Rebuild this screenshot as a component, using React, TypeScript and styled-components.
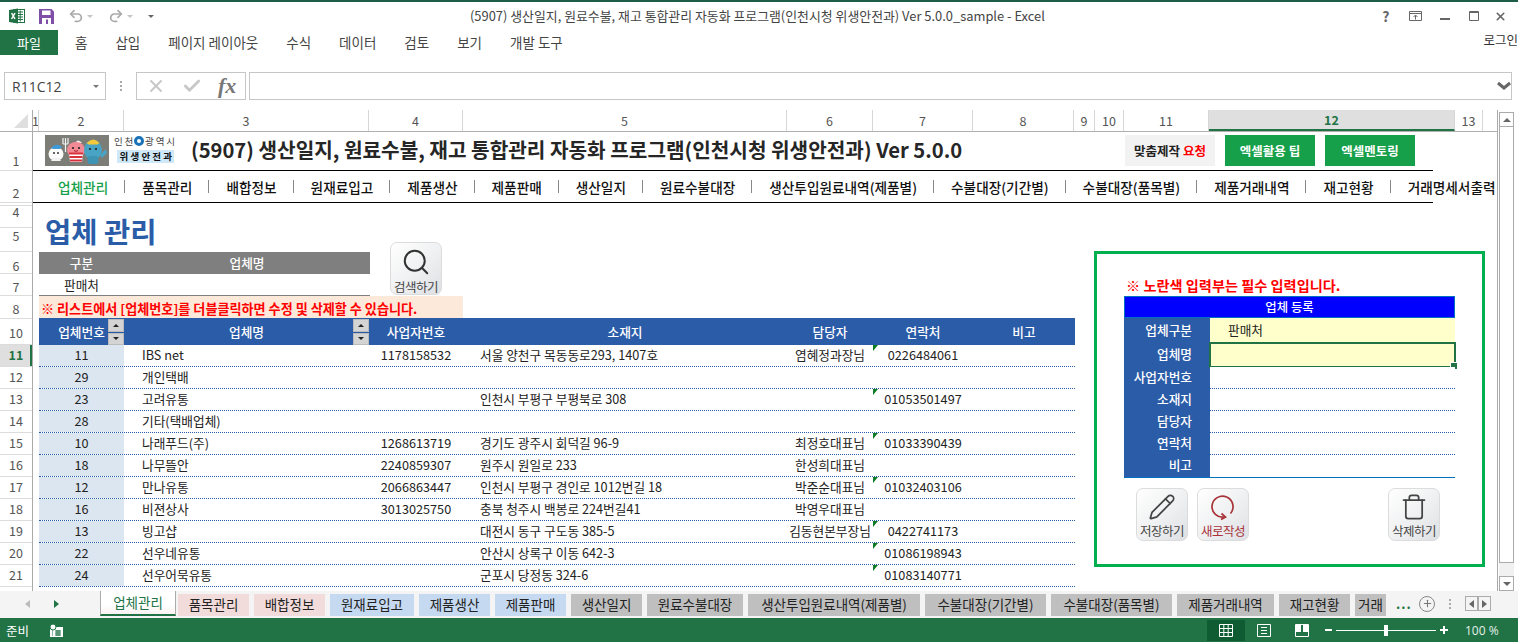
import React from 'react';
import styled, { createGlobalStyle } from 'styled-components';
import { Check, Pencil, Plus, Search, Trash, Undo2, Redo2, X } from 'lucide-react';

const GREEN = '#217346';
const BLUE = '#2b5ca8';
const KR = '"Noto Sans CJK KR", "Noto Sans", sans-serif';

const GlobalStyle = createGlobalStyle`
  html, body { margin: 0; padding: 0; background: #fff; }
  * { box-sizing: border-box; }
  body { font-family: ${KR}; }
`;

const Window = styled.div`
  width: 1518px;
  height: 642px;
  display: flex;
  flex-direction: column;
  overflow: hidden;
  border-top: 2px solid #1d5c46;
  background: #fff;
  color: #222;
`;

/* ---- title bar ---- */
const TitleBar = styled.div`
  height: 28px;
  display: flex;
  align-items: center;
  position: relative;
`;

const Qat = styled.div`
  display: flex;
  align-items: center;
  padding-left: 9px;
`;

const QatSlot = styled.span<{ $w: number }>`
  width: ${p => p.$w}px;
  display: flex;
  align-items: center;
`;

const Caret = styled.span<{ $color?: string }>`
  width: 0;
  height: 0;
  border-left: 3px solid transparent;
  border-right: 3px solid transparent;
  border-top: 3px solid ${p => p.$color || '#c4c4c4'};
  margin-left: 3px;
`;

const DocTitle = styled.div`
  position: absolute;
  left: 470px;
  top: 6px;
  font-size: 12.9px;
  line-height: 16px;
  color: #444;
  white-space: nowrap;
`;

const WinButtons = styled.div`
  margin-left: auto;
  display: flex;
  align-items: center;
  padding-right: 7px;
`;

const WinBtn = styled.span`
  width: 29.5px;
  display: flex;
  justify-content: center;
  align-items: center;
  font-size: 14px;
  font-weight: 700;
  color: #666;
  line-height: 16px;
  &:last-child { width: 22px; }
`;

/* ---- ribbon tabs ---- */
const RibbonTabs = styled.div`
  height: 25px;
  display: flex;
  align-items: center;
  gap: 28px;
  font-size: 13.5px;
  line-height: 25px;
  color: #444;
`;

const FileTab = styled.div`
  width: 58px;
  height: 25px;
  margin-right: -11px;
  background: ${GREEN};
  color: #fff;
  font-size: 13px;
  text-align: center;
`;

const Login = styled.div`
  margin-left: auto;
  margin-top: -7px;
  font-size: 12.5px;
  color: #333;
  white-space: nowrap;
`;

const RibbonGap = styled.div`
  height: 17px;
`;

/* ---- formula bar ---- */
const FormulaBar = styled.div`
  height: 28px;
  display: flex;
  align-items: stretch;
  padding-left: 4px;
  padding-right: 6px;
  margin-bottom: 10px;
`;

const NameBox = styled.div`
  width: 102px;
  border: 1px solid #c6c6c6;
  display: flex;
  align-items: center;
  justify-content: space-between;
  padding: 0 6px 0 7px;
  font-family: "Open Sans", sans-serif;
  font-size: 14px;
  color: #444;
`;

const Dots = styled.div`
  width: 30px;
  display: flex;
  flex-direction: column;
  align-items: center;
  justify-content: center;
  gap: 2px;
  & > i { width: 2px; height: 2px; background: #aaa; display: block; }
`;

const FxBox = styled.div`
  width: 110px;
  border: 1px solid #c6c6c6;
  display: flex;
  align-items: center;
  gap: 16px;
  padding-left: 9px;
`;

const FxText = styled.span`
  font-family: "Liberation Serif", serif;
  font-style: italic;
  font-weight: 700;
  font-size: 22px;
  line-height: 24px;
  color: #777;
`;

const FormulaInput = styled.div`
  flex: 1;
  margin-left: 3px;
  border: 1px solid #c6c6c6;
  display: flex;
  align-items: center;
  justify-content: flex-end;
`;

/* ---- workspace ---- */
const Workspace = styled.div`
  height: 481px;
  display: flex;
`;

const SheetPane = styled.div`
  width: 1498px;
  border-right: 1px solid #aaa;
  display: flex;
  flex-direction: column;
  overflow: hidden;
`;

const ColHeaders = styled.div`
  height: 22px;
  display: flex;
  flex: none;
  border-bottom: 1px solid #b0b0b0;
`;

const Corner = styled.div`
  width: 33px;
  border-right: 1px solid #aaa;
  position: relative;
  &::after {
    content: '';
    position: absolute;
    right: 4px;
    bottom: 3px;
    border-style: solid;
    border-width: 0 0 14px 14px;
    border-color: transparent transparent #dfdfdf transparent;
  }
`;

const ColHead = styled.div<{ $w: number; $active?: boolean }>`
  width: ${p => p.$w}px;
  flex: none;
  display: flex;
  align-items: center;
  justify-content: center;
  font-size: 12.5px;
  line-height: 20px;
  color: ${p => (p.$active ? GREEN : '#555')};
  font-weight: ${p => (p.$active ? 700 : 400)};
  background: ${p => (p.$active ? '#dfdfdf' : 'transparent')};
  border-right: 1px solid #d6d6d6;
  border-bottom: ${p => (p.$active ? `2px solid ${GREEN}` : '0')};
  overflow: hidden;
`;

const SheetBody = styled.div`
  flex: 1;
  display: flex;
  min-height: 0;
`;

const RowHeaders = styled.div`
  width: 33px;
  flex: none;
  border-right: 1px solid #aaa;
  display: flex;
  flex-direction: column;
`;

const RowHead = styled.div<{ $h: number; $pb: number; $active?: boolean }>`
  height: ${p => p.$h}px;
  flex: none;
  display: flex;
  align-items: flex-end;
  justify-content: center;
  padding-bottom: ${p => p.$pb}px;
  font-size: 12.5px;
  line-height: 14px;
  color: ${p => (p.$active ? GREEN : '#555')};
  font-weight: ${p => (p.$active ? 700 : 400)};
  background: ${p => (p.$active ? '#dfdfdf' : 'transparent')};
  border-bottom: 1px solid #dcdcdc;
  box-shadow: ${p => (p.$active ? `inset -2px 0 0 ${GREEN}` : 'none')};
`;

const Sheet = styled.div`
  flex: 1;
  min-width: 0;
`;

const BannerRow = styled.div`
  width: 1400px;
  height: 39px;
  border-bottom: 1px solid #000;
  display: flex;
  align-items: flex-start;
  padding: 3px 0 0 12px;
`;

const Logo = styled.div`
  width: 133px;
  height: 31px;
  display: flex;
  gap: 5px;
  flex: none;
`;

const LogoText = styled.div`
  display: flex;
  flex-direction: column;
  align-items: center;
  font-size: 9.5px;
  line-height: 13px;
  letter-spacing: 1.8px;
  color: #444;
  white-space: nowrap;
`;

const LogoDept = styled.span`
  margin-top: 2px;
  padding: 0 0 0 3px;
  font-weight: 700;
  font-size: 9.5px;
  line-height: 13px;
  letter-spacing: 2.2px;
  color: #111;
  background: #cfe8f8;
`;

const LogoDot = styled.i`
  display: inline-block;
  width: 10px;
  height: 10px;
  border-radius: 50%;
  border: 3px solid #1a73b8;
  vertical-align: -1px;
  margin: 0 1px 0 -1px;
`;

const MainTitle = styled.h1`
  margin: 0 0 0 13px;
  font-size: 20.2px;
  line-height: 30px;
  font-weight: 700;
  color: #262626;
  white-space: nowrap;
`;

const LinkButtons = styled.div`
  margin-left: auto;
  display: flex;
  gap: 10px;
  padding-right: 18px;
`;

const LinkButton = styled.div<{ $green?: boolean }>`
  width: 90px;
  height: 31px;
  display: flex;
  align-items: center;
  justify-content: center;
  font-size: 12.5px;
  font-weight: 700;
  color: ${p => (p.$green ? '#fff' : '#222')};
  background: ${p => (p.$green ? '#17a04a' : '#f2f2f2')};
  & > em { font-style: normal; color: #f00; margin-left: 3px; }
`;

const NavRow = styled.div`
  width: 1400px;
  height: 32px;
  border-bottom: 1px solid #000;
  display: flex;
  align-items: center;
  padding-left: 25px;
  margin-bottom: 3px;
  white-space: nowrap;
`;

const NavItem = styled.span<{ $active?: boolean }>`
  font-size: 13.65px;
  line-height: 20px;
  font-weight: 500;
  color: ${p => (p.$active ? '#17a04a' : '#111')};
`;

const NavSep = styled.i`
  width: 1px;
  height: 13px;
  margin: 0 17px 0 16px;
  background: #888;
  flex: none;
`;

const Content = styled.div`
  display: flex;
  align-items: flex-start;
  padding-left: 6px;
  position: relative;
`;

const ListColumn = styled.div`
  width: 1036px;
  flex: none;
`;

const PageTitle = styled.h2`
  margin: 0;
  height: 46px;
  padding-left: 6px;
  font-size: 28.5px;
  line-height: 50px;
  font-weight: 700;
  color: ${BLUE};
`;

const SearchHead = styled.div`
  width: 331px;
  height: 22px;
  display: grid;
  grid-template-columns: 85px 1fr;
  background: #7f7f7f;
  color: #fff;
  font-size: 12.7px;
  line-height: 22px;
  text-align: center;
  font-weight: 500;
`;

const SearchValue = styled.div`
  width: 331px;
  height: 22px;
  display: grid;
  grid-template-columns: 85px 1fr;
  border-bottom: 1px solid #7f7f7f;
  font-size: 12.7px;
  line-height: 21px;
  text-align: center;
`;

const Notice = styled.div`
  width: 424px;
  height: 22px;
  background: #fde9d9;
  color: #f00;
  font-size: 13.1px;
  font-weight: 700;
  line-height: 25px;
  padding-left: 2px;
  white-space: nowrap;
`;

const ShapeButton = styled.div<{ $red?: boolean }>`
  width: 52px;
  height: 53px;
  flex: none;
  border: 1px solid #dcdcdc;
  border-radius: 7px;
  background: linear-gradient(135deg, #fff 0%, #f0f1f2 50%, #dde0e4 100%);
  display: flex;
  flex-direction: column;
  align-items: center;
  padding-top: 4px;
  font-size: 12.5px;
  line-height: 16px;
  letter-spacing: -0.5px;
  color: ${p => (p.$red ? '#a8343a' : '#444')};
  white-space: nowrap;
  & > svg { flex: none; margin-bottom: 2px; }
`;

const FloatingSearch = styled(ShapeButton)`
  position: absolute;
  left: 357px;
  top: 36px;
`;

const TableHeader = styled.div`
  height: 27px;
  display: grid;
  grid-template-columns: 85px 245px 94px 324px 86px 100px 102px;
  background: ${BLUE};
  color: #fff;
  font-size: 12.7px;
  font-weight: 500;
`;

const HeadCell = styled.div`
  display: flex;
  align-items: center;
  justify-content: center;
  position: relative;
`;

const Spinner = styled.div`
  position: absolute;
  right: 0;
  top: 1px;
  bottom: 0;
  width: 16px;
  display: flex;
  flex-direction: column;
  gap: 1px;
`;

const SpinBtn = styled.span<{ $up?: boolean }>`
  flex: 1;
  background: #d4d4d4;
  border: 1px solid #bbb;
  display: flex;
  align-items: center;
  justify-content: center;
  &::after {
    content: '';
    border-left: 3px solid transparent;
    border-right: 3px solid transparent;
    ${p => (p.$up ? 'border-bottom: 3px solid #222;' : 'border-top: 3px solid #222;')}
  }
`;

const TableRow = styled.div`
  height: 22px;
  display: grid;
  grid-template-columns: 85px 245px 94px 324px 86px 100px 102px;
  border-bottom: 1px dotted ${BLUE};
  font-size: 12.7px;
  line-height: 20px;
  color: #222;
  white-space: nowrap;
`;

const Cell = styled.div<{ $pad?: number; $center?: boolean; $tint?: boolean; $flag?: boolean }>`
  position: relative;
  padding-left: ${p => p.$pad || 0}px;
  text-align: ${p => (p.$center ? 'center' : 'left')};
  background: ${p => (p.$tint ? '#dce6f1' : 'transparent')};
  &::before {
    content: ${p => (p.$flag ? "''" : 'none')};
    position: absolute;
    left: 0;
    top: 0;
    border-style: solid;
    border-width: 6px 5px 0 0;
    border-color: #0b7a20 transparent transparent transparent;
  }
`;

/* ---- form panel ---- */
const Panel = styled.div`
  width: 391px;
  height: 316px;
  flex: none;
  margin: 45px 0 0 19px;
  border: 3px solid #00b050;
  padding: 22px 27px 0;
  display: flex;
  flex-direction: column;
`;

const PanelNote = styled.div`
  height: 20px;
  font-size: 14.2px;
  font-weight: 700;
  line-height: 19px;
  color: #f00;
  padding-left: 2px;
  white-space: nowrap;
`;

const FormTitle = styled.div`
  width: 331px;
  height: 22px;
  background: #00f;
  border: 1px solid #0070c0;
  color: #fff;
  font-size: 12.4px;
  font-weight: 500;
  line-height: 20px;
  text-align: center;
`;

const FormGrid = styled.div`
  width: 331px;
  display: grid;
  grid-template-columns: 86px 1fr;
  border-bottom: 1px solid #0070c0;
`;

const FormLabel = styled.div<{ $h: number }>`
  height: ${p => p.$h}px;
  background: ${BLUE};
  color: #fff;
  font-size: 12.7px;
  font-weight: 500;
  line-height: ${p => p.$h - 2}px;
  text-align: right;
  padding-right: 18px;
`;

const FormValue = styled.div<{ $h: number; $yellow?: boolean; $dotted?: boolean; $selected?: boolean }>`
  height: ${p => p.$h}px;
  position: relative;
  padding-left: 18px;
  font-size: 12.7px;
  line-height: ${p => p.$h - 2}px;
  background: ${p => (p.$yellow ? '#ffffcc' : '#fff')};
  border-bottom: ${p => (p.$dotted ? `1px dotted ${BLUE}` : '0')};
  outline: ${p => (p.$selected ? `2px solid ${GREEN}` : 'none')};
  outline-offset: -1px;
  &::after {
    content: ${p => (p.$selected ? "''" : 'none')};
    position: absolute;
    right: -3px;
    bottom: -3px;
    width: 6px;
    height: 6px;
    background: ${GREEN};
    border: 1px solid #fff;
  }
`;

const PanelButtons = styled.div`
  display: flex;
  gap: 9px;
  margin-top: 10px;
  padding: 0 15px 0 12px;
  & > :last-child { margin-left: auto; }
`;

/* ---- scrollbar ---- */
const ScrollCol = styled.div`
  width: 15px;
  margin-left: 1px;
  display: flex;
  flex-direction: column;
  padding-top: 2px;
`;

const ScrollBtn = styled.div<{ $up?: boolean }>`
  height: 15px;
  flex: none;
  border: 1px solid #ababab;
  display: flex;
  align-items: center;
  justify-content: center;
  &::after {
    content: '';
    border-left: 4px solid transparent;
    border-right: 4px solid transparent;
    ${p => (p.$up ? 'border-bottom: 4px solid #666;' : 'border-top: 4px solid #666;')}
  }
`;

const ScrollThumb = styled.div`
  height: 436px;
  flex: none;
  border: 1px solid #ababab;
  border-top: 0;
`;

const ScrollTrack = styled.div`
  flex: 1;
  background: #f1f1f1;
`;

/* ---- sheet tabs ---- */
const TabBar = styled.div`
  height: 27px;
  flex: none;
  display: flex;
  align-items: flex-start;
  background: #f4f4f4;
  white-space: nowrap;
`;

const TabNav = styled.div`
  width: 100px;
  height: 25px;
  flex: none;
  display: flex;
  align-items: center;
  padding-left: 25px;
  gap: 24px;
`;

const NavArrow = styled.i<{ $color: string; $left?: boolean }>`
  border-top: 4px solid transparent;
  border-bottom: 4px solid transparent;
  ${p => (p.$left ? `border-right: 5px solid ${p.$color};` : `border-left: 5px solid ${p.$color};`)}
`;

const ActiveTab = styled.div`
  width: 76px;
  height: 25px;
  flex: none;
  margin-right: 2px;
  background: linear-gradient(#fff 60%, #fbf1f1);
  border: 1px solid #ababab;
  border-top: 0;
  border-bottom: 2px solid ${GREEN};
  color: ${GREEN};
  font-size: 13.5px;
  line-height: 22px;
  text-align: center;
`;

const SheetTab = styled.div<{ $w: number; $bg: string }>`
  width: ${p => p.$w}px;
  height: 22px;
  flex: none;
  margin-top: 3px;
  margin-right: 5px;
  overflow: hidden;
  background: ${p => p.$bg};
  color: #222;
  font-size: 13.5px;
  line-height: 20px;
  text-align: center;
`;

const TabTools = styled.div`
  flex: 1;
  height: 25px;
  display: flex;
  align-items: center;
  color: #555;
`;

const More = styled.span`
  margin-left: 5px;
  width: 23px;
  color: ${GREEN};
  font-size: 13px;
  font-weight: 700;
  letter-spacing: 1px;
`;

const AddCircle = styled.span`
  width: 16px;
  height: 16px;
  border-radius: 50%;
  border: 1.5px solid #888;
  display: flex;
  align-items: center;
  justify-content: center;
`;

const ArrowBox = styled.span`
  width: 13px;
  height: 15px;
  border: 1px solid #ababab;
  display: flex;
  align-items: center;
  justify-content: center;
`;

/* ---- status bar ---- */
const StatusBar = styled.div`
  height: 24px;
  flex: none;
  background: ${GREEN};
  color: #fff;
  display: flex;
  align-items: center;
  padding-left: 6px;
  font-size: 12.5px;
`;

const StatusIcon = styled.span`
  margin-left: 21px;
  display: flex;
  align-items: center;
`;

const StatusRight = styled.div`
  margin-left: auto;
  padding-right: 15px;
  display: flex;
  align-items: center;
  height: 100%;
`;

const ViewBtn = styled.div<{ $on?: boolean }>`
  width: 38px;
  height: 21px;
  display: flex;
  align-items: center;
  justify-content: center;
  background: ${p => (p.$on ? '#0f5c33' : 'transparent')};
`;

const ZoomTrack = styled.div`
  width: 100px;
  height: 1px;
  margin: 0 4px;
  background: #fff;
  position: relative;
`;

const ZoomThumb = styled.i`
  position: absolute;
  left: 48px;
  top: -5px;
  width: 4px;
  height: 11px;
  background: #fff;
`;

const ZoomSign = styled.span`
  width: 7px;
  height: 2px;
  margin-left: 4px;
  background: #fff;
  position: relative;
`;

const ZoomPlus = styled(ZoomSign)`
  width: 8px;
  margin-left: 0;
  &::after {
    content: '';
    position: absolute;
    left: 3px;
    top: -3px;
    width: 2px;
    height: 8px;
    background: #fff;
  }
`;

const ZoomLabel = styled.span`
  width: 55px;
  padding-left: 17px;
  font-family: "Open Sans", sans-serif;
  font-size: 12px;
  color: #e6efe9;
  white-space: nowrap;
`;

const colWidths = [6, 85, 245, 94, 324, 86, 100, 101, 21, 29, 85, 246, 28];

const rowHeads: { label: string; h: number; pb: number; active?: boolean }[] = [
  { label: '1', h: 39, pb: 2 },
  { label: '2', h: 32, pb: 2 },
  { label: '', h: 3, pb: 0 },
  { label: '4', h: 22, pb: 8 },
  { label: '5', h: 24, pb: 8 },
  { label: '6', h: 22, pb: 0 },
  { label: '7', h: 22, pb: 1 },
  { label: '8', h: 23, pb: 2 },
  { label: '10', h: 26, pb: 4 },
  { label: '11', h: 22, pb: 4, active: true },
  ...Array.from({ length: 10 }, (_, i) => ({ label: String(i + 12), h: 22, pb: 4 })),
];

const navItems = ['업체관리', '품목관리', '배합정보', '원재료입고', '제품생산', '제품판매', '생산일지', '원료수불대장', '생산투입원료내역(제품별)', '수불대장(기간별)', '수불대장(품목별)', '제품거래내역', '재고현황', '거래명세서출력'];

const rows = [
  ['11', 'IBS net', '1178158532', '서울 양천구 목동동로293, 1407호', '염혜정과장님', '0226484061'],
  ['29', '개인택배', '', '', '', ''],
  ['23', '고려유통', '', '인천시 부평구 부평북로 308', '', '01053501497'],
  ['28', '기타(택배업체)', '', '', '', ''],
  ['10', '나래푸드(주)', '1268613719', '경기도 광주시 회덕길 96-9', '최정호대표님', '01033390439'],
  ['18', '나무뜰안', '2240859307', '원주시 원일로 233', '한성희대표님', ''],
  ['12', '만나유통', '2066863447', '인천시 부평구 경인로 1012번길 18', '박준순대표님', '01032403106'],
  ['16', '비젼상사', '3013025750', '충북 청주시 백봉로 224번길41', '박영우대표님', ''],
  ['13', '빙고샵', '', '대전시 동구 구도동 385-5', '김동현본부장님', '0422741173'],
  ['22', '선우네유통', '', '안산시 상록구 이동 642-3', '', '01086198943'],
  ['24', '선우어묵유통', '', '군포시 당정동 324-6', '', '01083140771'],
];

const PINK = '#f2dcdb';
const SKY = '#c5d9f1';
const GRAY = '#bfbfbf';

const tabs = [
  { label: '품목관리', w: 71, bg: PINK },
  { label: '배합정보', w: 71, bg: PINK },
  { label: '원재료입고', w: 84, bg: SKY },
  { label: '제품생산', w: 71, bg: SKY },
  { label: '제품판매', w: 71, bg: SKY },
  { label: '생산일지', w: 71, bg: GRAY },
  { label: '원료수불대장', w: 96, bg: GRAY },
  { label: '생산투입원료내역(제품별)', w: 172, bg: GRAY },
  { label: '수불대장(기간별)', w: 121, bg: GRAY },
  { label: '수불대장(품목별)', w: 121, bg: GRAY },
  { label: '제품거래내역', w: 97, bg: GRAY },
  { label: '재고현황', w: 71, bg: GRAY },
  { label: '거래', w: 31, bg: GRAY },
];

const ExcelIcon = () => (
  <svg width="16" height="16" viewBox="0 0 16 16">
    <rect x="5" y="1.5" width="10.5" height="13" fill="#fff" stroke="#217346" />
    <path d="M9 4h5M9 6.5h5M9 9h5M9 11.5h5M11.2 2.5v11" stroke="#217346" strokeWidth="1" fill="none" />
    <path d="M0 2l9-1.5v15L0 14z" fill="#217346" />
    <path d="M2.6 5l3.4 6M6 5l-3.4 6" stroke="#fff" strokeWidth="1.5" fill="none" />
  </svg>
);

const SaveIcon = () => (
  <svg width="15" height="15" viewBox="0 0 15 15">
    <path d="M0 0h12.5L15 2.5V15H0z" fill="#7f4ea6" />
    <rect x="3" y="1.5" width="8.5" height="4.5" fill="#fff" />
    <rect x="3" y="9" width="9" height="6" fill="#fff" />
    <rect x="7" y="10.5" width="2" height="4.5" fill="#7f4ea6" />
  </svg>
);

const LogoArt = () => (
  <svg width="64" height="31" viewBox="0 0 64 31">
    <rect width="64" height="31" fill="#7b7d76" />
    {/* white mascot with a blue cap */}
    <ellipse cx="11" cy="19" rx="7.5" ry="7" fill="#fbfbfb" />
    <path d="M6 26l2-3h6l2 3z" fill="#f1f1f1" />
    <path d="M6 13q5-6 11-1l-2 2H8z" fill="#3f9ad8" />
    <circle cx="9" cy="18" r="0.9" fill="#222" />
    <circle cx="13" cy="18" r="0.9" fill="#222" />
    {/* fork */}
    <path d="M18 3v6M20.5 3v6M23 3v6M18 9h5M20.5 9v8" stroke="#f4f4f4" strokeWidth="1.2" fill="none" />
    {/* pink mascot, striped apron */}
    <path d="M30 8q3-5 7 0z" fill="#f0f0f0" />
    <ellipse cx="31" cy="15" rx="9" ry="8" fill="#f28a95" />
    <path d="M24 18h14l-1 9H25z" fill="#fff" />
    <path d="M24 18.5h14M24.5 22h13M25 25.5h12" stroke="#d8303c" strokeWidth="1.8" />
    <circle cx="28" cy="13" r="1.1" fill="#222" />
    <circle cx="34" cy="13" r="1.1" fill="#222" />
    <path d="M29 15.5q2 1.8 4 0" stroke="#a81f2b" fill="none" />
    {/* blue mascot with a yellow cap */}
    <ellipse cx="48" cy="15" rx="9" ry="10" fill="#49a3c4" />
    <rect x="42.5" y="21" width="11" height="8" rx="3" fill="#3e94b4" />
    <path d="M55 20l6-6 1 4-5 5z" fill="#49a3c4" />
    <path d="M41.5 8q7-7 13 0l-2 1.5H43.5z" fill="#f5c93c" />
    <circle cx="45" cy="14" r="1.1" fill="#222" />
    <circle cx="51" cy="14" r="1.1" fill="#222" />
  </svg>
);

const RefreshIcon = () => (
  <svg width="28" height="28" viewBox="0 0 28 28" fill="none" stroke="#a8343a" strokeWidth="1.7">
    <path d="M21.5 20.5A10.5 10.5 0 1 0 15.5 24" />
    <path d="M12.5 20.5l4 3.5-4.5 2.5" />
  </svg>
);

const GridIcon = () => (
  <svg width="14" height="13" viewBox="0 0 14 13" fill="none" stroke="#fff">
    <path d="M.5.5h13v12H.5zM.5 4.5h13M.5 8.5h13M4.8.5v12M9.2.5v12" />
  </svg>
);

const PageIcon = () => (
  <svg width="14" height="13" viewBox="0 0 14 13" fill="none" stroke="#fff">
    <path d="M.5.5h13v12H.5zM4 3.5h6M4 6.5h6M4 9.5h6" />
  </svg>
);

const BreakIcon = () => (
  <svg width="14" height="13" viewBox="0 0 14 13">
    <path d="M.5.5h13v12H.5z" fill="none" stroke="#fff" />
    <path d="M1 1h5v7H1zM8 1h5v7H8z" fill="#fff" />
  </svg>
);

const MacroIcon = () => (
  <svg width="13" height="13" viewBox="0 0 13 13">
    <rect y="3" width="13" height="10" fill="#fff" />
    <circle cx="3" cy="3" r="3" fill="#fff" stroke="#217346" />
    <path d="M5 7h6M5 9h6M5 11h6M7 6v6M9 6v6M2 7h1M2 9h1M2 11h1" stroke="#217346" />
  </svg>
);

const App: React.FC = () => {
  return (
    <>
      <GlobalStyle />
      <Window>
        <TitleBar>
          <Qat>
            <QatSlot $w={30}><ExcelIcon /></QatSlot>
            <QatSlot $w={29}><SaveIcon /></QatSlot>
            <QatSlot $w={40}><Undo2 size={16} color="#aaa" strokeWidth={2.6} /><Caret /></QatSlot>
            <QatSlot $w={37}><Redo2 size={16} color="#aaa" strokeWidth={2.6} /><Caret /></QatSlot>
            <QatSlot $w={10}><Caret $color="#666" /></QatSlot>
          </Qat>
          <DocTitle>(5907) 생산일지, 원료수불, 재고 통합관리 자동화 프로그램(인천시청 위생안전과) Ver 5.0.0_sample - Excel</DocTitle>
          <WinButtons>
            <WinBtn>?</WinBtn>
            <WinBtn>
              <svg width="13" height="10" viewBox="0 0 13 10" fill="none" stroke="#666">
                <path d="M.5.5h12v9H.5zM.5 2.5h12M6.5 8.5V4.5M4.5 6l2-2 2 2" />
              </svg>
            </WinBtn>
            <WinBtn>
              <svg width="10" height="10" viewBox="0 0 10 10"><rect y="7" width="10" height="2" fill="#666" /></svg>
            </WinBtn>
            <WinBtn>
              <svg width="10" height="10" viewBox="0 0 10 10" fill="none" stroke="#666">
                <path d="M.5.5h9v9h-9zM.5 1.5h9" />
              </svg>
            </WinBtn>
            <WinBtn><X size={13} color="#666" strokeWidth={3} /></WinBtn>
          </WinButtons>
        </TitleBar>

        <RibbonTabs>
          <FileTab>파일</FileTab>
          {['홈', '삽입', '페이지 레이아웃', '수식', '데이터', '검토', '보기', '개발 도구'].map(t => (
            <span key={t}>{t}</span>
          ))}
          <Login>로그인</Login>
        </RibbonTabs>
        <RibbonGap />

        <FormulaBar>
          <NameBox>R11C12<Caret $color="#777" /></NameBox>
          <Dots><i /><i /><i /></Dots>
          <FxBox>
            <X size={20} color="#c8c8c8" strokeWidth={2.4} />
            <Check size={20} color="#c8c8c8" strokeWidth={3.4} />
            <FxText>fx</FxText>
          </FxBox>
          <FormulaInput>
            <svg width="14" height="10" viewBox="0 0 14 10"><path d="M1 2l6 5 6-5" fill="none" stroke="#666" strokeWidth="3" /></svg>
          </FormulaInput>
        </FormulaBar>

        <Workspace>
          <SheetPane>
            <ColHeaders>
              <Corner />
              {colWidths.map((w, i) => (
                <ColHead key={i} $w={w} $active={i === 11}>{i + 1}</ColHead>
              ))}
            </ColHeaders>
            <SheetBody>
              <RowHeaders>
                {rowHeads.map((r, i) => (
                  <RowHead key={i} $h={r.h} $pb={r.pb} $active={r.active}>{r.label}</RowHead>
                ))}
              </RowHeaders>
              <Sheet>
                <BannerRow>
                  <Logo>
                    <LogoArt />
                    <LogoText>
                      <span>인천<LogoDot />광역시</span>
                      <LogoDept>위생안전과</LogoDept>
                    </LogoText>
                  </Logo>
                  <MainTitle>(5907) 생산일지, 원료수불, 재고 통합관리 자동화 프로그램(인천시청 위생안전과) Ver 5.0.0</MainTitle>
                  <LinkButtons>
                    <LinkButton>맞춤제작<em>요청</em></LinkButton>
                    <LinkButton $green>엑셀활용 팁</LinkButton>
                    <LinkButton $green>엑셀멘토링</LinkButton>
                  </LinkButtons>
                </BannerRow>
                <NavRow>
                  {navItems.map((n, i) => (
                    <React.Fragment key={n}>
                      <NavItem $active={i === 0}>{n}</NavItem>
                      {i < navItems.length - 1 && <NavSep />}
                    </React.Fragment>
                  ))}
                </NavRow>
                <Content>
                  <ListColumn>
                    <PageTitle>업체 관리</PageTitle>
                    <SearchHead><span>구분</span><span>업체명</span></SearchHead>
                    <SearchValue><span>판매처</span><span /></SearchValue>
                    <Notice>※ 리스트에서 [업체번호]를 더블클릭하면 수정 및 삭제할 수 있습니다.</Notice>
                    <FloatingSearch>
                      <Search size={30} color="#333" strokeWidth={1.6} />
                      검색하기
                    </FloatingSearch>
                    <TableHeader>
                      <HeadCell>업체번호<Spinner><SpinBtn $up /><SpinBtn /></Spinner></HeadCell>
                      <HeadCell>업체명<Spinner><SpinBtn $up /><SpinBtn /></Spinner></HeadCell>
                      <HeadCell>사업자번호</HeadCell>
                      <HeadCell>소재지</HeadCell>
                      <HeadCell>담당자</HeadCell>
                      <HeadCell>연락처</HeadCell>
                      <HeadCell>비고</HeadCell>
                    </TableHeader>
                    {rows.map(r => (
                      <TableRow key={r[0]}>
                        <Cell $center $tint>{r[0]}</Cell>
                        <Cell $pad={18}>{r[1]}</Cell>
                        <Cell $center>{r[2]}</Cell>
                        <Cell $pad={17}>{r[3]}</Cell>
                        <Cell $center>{r[4]}</Cell>
                        <Cell $center $flag={r[5] !== ''}>{r[5]}</Cell>
                        <Cell />
                      </TableRow>
                    ))}
                  </ListColumn>
                  <Panel>
                    <PanelNote>※ 노란색 입력부는 필수 입력입니다.</PanelNote>
                    <FormTitle>업체 등록</FormTitle>
                    <FormGrid>
                      <FormLabel $h={25}>업체구분</FormLabel>
                      <FormValue $h={25} $yellow>판매처</FormValue>
                      <FormLabel $h={24}>업체명</FormLabel>
                      <FormValue $h={24} $yellow $selected />
                      <FormLabel $h={22}>사업자번호</FormLabel>
                      <FormValue $h={22} $dotted />
                      <FormLabel $h={22}>소재지</FormLabel>
                      <FormValue $h={22} $dotted />
                      <FormLabel $h={22}>담당자</FormLabel>
                      <FormValue $h={22} $dotted />
                      <FormLabel $h={22}>연락처</FormLabel>
                      <FormValue $h={22} $dotted />
                      <FormLabel $h={22}>비고</FormLabel>
                      <FormValue $h={22} />
                    </FormGrid>
                    <PanelButtons>
                      <ShapeButton><Pencil size={28} color="#444" strokeWidth={1.5} />저장하기</ShapeButton>
                      <ShapeButton $red><RefreshIcon />새로작성</ShapeButton>
                      <ShapeButton><Trash size={28} color="#444" strokeWidth={1.5} />삭제하기</ShapeButton>
                    </PanelButtons>
                  </Panel>
                </Content>
              </Sheet>
            </SheetBody>
          </SheetPane>
          <ScrollCol>
            <ScrollBtn $up />
            <ScrollThumb />
            <ScrollTrack />
            <ScrollBtn />
          </ScrollCol>
        </Workspace>

        <TabBar>
          <TabNav>
            <NavArrow $color="#bbb" $left />
            <NavArrow $color={GREEN} />
          </TabNav>
          <ActiveTab>업체관리</ActiveTab>
          {tabs.map(t => (
            <SheetTab key={t.label} $w={t.w} $bg={t.bg}>{t.label}</SheetTab>
          ))}
          <TabTools>
            <More>...</More>
            <AddCircle><Plus size={11} color="#777" strokeWidth={2.4} /></AddCircle>
            <Dots><i /><i /><i /></Dots>
            <ArrowBox><NavArrow $color="#666" $left /></ArrowBox>
            <ArrowBox><NavArrow $color="#666" /></ArrowBox>
          </TabTools>
        </TabBar>

        <StatusBar>
          <span>준비</span>
          <StatusIcon><MacroIcon /></StatusIcon>
          <StatusRight>
            <ViewBtn $on><GridIcon /></ViewBtn>
            <ViewBtn><PageIcon /></ViewBtn>
            <ViewBtn><BreakIcon /></ViewBtn>
            <ZoomSign />
            <ZoomTrack><ZoomThumb /></ZoomTrack>
            <ZoomPlus />
            <ZoomLabel>100 %</ZoomLabel>
          </StatusRight>
        </StatusBar>
      </Window>
    </>
  );
};

export default App;
